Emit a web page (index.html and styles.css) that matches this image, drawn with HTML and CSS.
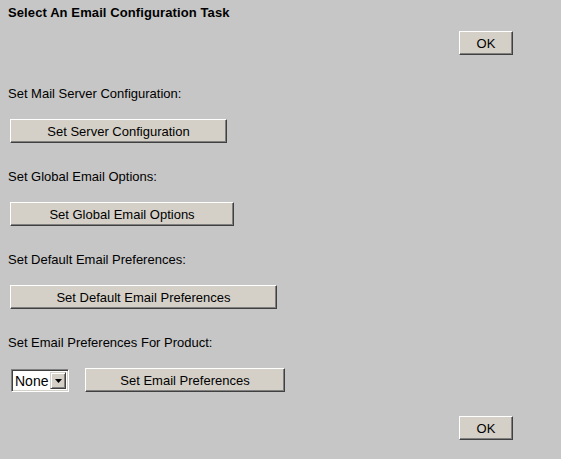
FILE: index.html
```html
<!DOCTYPE html>
<html>
<head>
<meta charset="utf-8">
<link rel="stylesheet" href="styles.css">
</head>
<body>
<div class="page">
  <h1 class="title">Select An Email Configuration Task</h1>
  <div class="ok-row top"><button class="btn ok">OK</button></div>

  <div class="section first">
    <div class="label">Set Mail Server Configuration:</div>
    <button class="btn w-server">Set Server Configuration</button>
  </div>
  <div class="section">
    <div class="label">Set Global Email Options:</div>
    <button class="btn w-global">Set Global Email Options</button>
  </div>
  <div class="section">
    <div class="label">Set Default Email Preferences:</div>
    <button class="btn w-default">Set Default Email Preferences</button>
  </div>
  <div class="section">
    <div class="label">Set Email Preferences For Product:</div>
    <div class="product-row">
      <div class="select">
        <span class="select-value">None</span>
        <span class="select-arrow"><svg width="7" height="4" viewBox="0 0 7 4"><path d="M0 0H7L3.5 4Z" fill="#000"/></svg></span>
      </div>
      <button class="btn w-prefs">Set Email Preferences</button>
    </div>
  </div>

  <div class="ok-row bottom"><button class="btn ok">OK</button></div>
</div>
</body>
</html>
```

FILE: styles.css
```css
html, body {
  margin: 0;
  padding: 0;
  background: #c6c6c6;
}
body {
  width: 561px;
  height: 459px;
  overflow: hidden;
  font-family: "Liberation Sans", Arial, sans-serif;
  font-size: 13px;
  color: #000;
}
.page {
  display: flex;
  flex-direction: column;
  padding: 5px 0 0 8px;
}
.title {
  margin: 0;
  font-size: 13px;
  font-weight: bold;
  line-height: 15px;
  letter-spacing: 0.1px;
}
.ok-row {
  display: flex;
  justify-content: flex-end;
  padding-right: 48px;
}
.ok-row.top { margin-top: 11px; }
.ok-row.bottom { margin-top: 24px; }
.btn {
  box-sizing: border-box;
  height: 24px;
  margin: 0;
  padding: 0;
  font-family: "Liberation Sans", Arial, sans-serif;
  font-size: 13px;
  color: #000;
  background: #d4d0c8;
  border: 1px solid;
  border-color: #ffffff #404040 #404040 #ffffff;
  box-shadow: inset -1px -1px 0 #808080, inset 1px 1px 0 #d4d0c8;
  border-radius: 0;
}
.ok { width: 54px; }
.section {
  display: flex;
  flex-direction: column;
  align-items: flex-start;
  margin-top: 26px;
}
.section.first { margin-top: 31px; }
.label {
  line-height: 15px;
  margin-bottom: 18px;
}
.section > .btn { margin-left: 2px; }
.w-server { width: 217px; }
.w-global { width: 224px; }
.w-default { width: 267px; }
.w-prefs { width: 200px; }
.product-row {
  display: flex;
  align-items: flex-start;
  gap: 16px;
  margin-left: 2px;
}
.select {
  box-sizing: border-box;
  width: 58px;
  height: 23px;
  margin-left: 1px;
  margin-top: 1px;
  display: flex;
  align-items: center;
  background: #fff;
  border: 1px solid;
  border-color: #808080 #ffffff #ffffff #808080;
  box-shadow: inset 1px 1px 0 #404040, inset -1px -1px 0 #d4d0c8;
  padding: 2px;
}
.select-value {
  flex: 1;
  font-size: 14px;
  line-height: 16px;
  padding-left: 1px;
}
.select-arrow {
  box-sizing: border-box;
  width: 16px;
  height: 17px;
  display: flex;
  align-items: center;
  justify-content: center;
  background: #d4d0c8;
  border: 1px solid;
  border-color: #d4d0c8 #404040 #404040 #d4d0c8;
  box-shadow: inset 1px 1px 0 #fff, inset -1px -1px 0 #808080;
}
```
